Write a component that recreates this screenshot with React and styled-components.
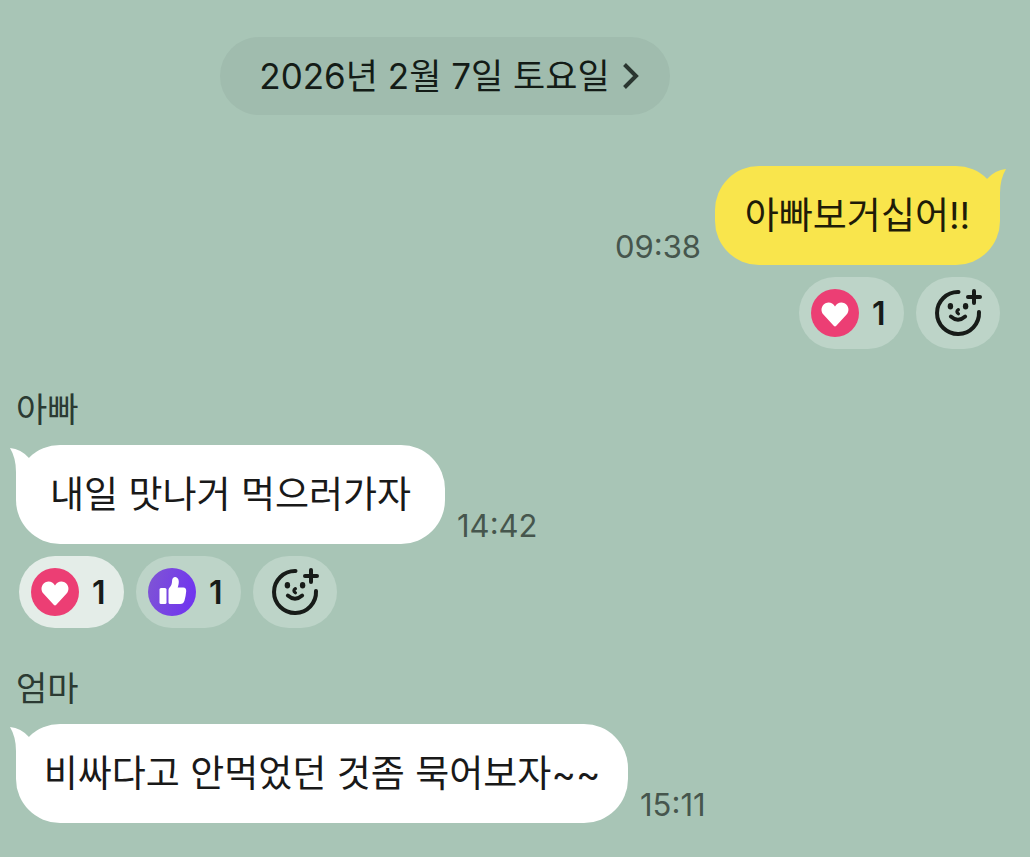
import React from "react";
import styled, { createGlobalStyle } from "styled-components";

const GlobalStyle = createGlobalStyle`
  *, *::before, *::after { box-sizing: border-box; }
  body {
    margin: 0;
    background: #a8c5b6;
    color: #191c1a;
    font-family: Inter, "Noto Sans CJK KR", sans-serif;
  }
`;

const Chat = styled.main`
  display: flex;
  flex-direction: column;
  min-height: 100vh;
  padding: 37px 30px 34px 16px;
`;

const DateRow = styled.div`
  display: flex;
  justify-content: center;
  padding-right: 126px;
  margin-bottom: 51px;
`;

const DatePill = styled.button`
  display: flex;
  align-items: center;
  justify-content: center;
  gap: 13px;
  width: 450px;
  height: 78px;
  padding: 0 0 0 8px;
  border: 0;
  border-radius: 39px;
  background: #a0bcae;
  color: #141c17;
  font: inherit;
  font-size: 35px;
  line-height: 48px;
  white-space: nowrap;
`;

const Message = styled.article`
  display: flex;
  flex-direction: column;
  align-items: ${(p) => (p.$mine ? "flex-end" : "flex-start")};
`;

const Sender = styled.h2`
  margin: 37px 0 11px;
  color: #2b3a32;
  font-size: 34px;
  font-weight: 400;
  line-height: 48px;
`;

const BubbleRow = styled.div`
  display: flex;
  flex-direction: ${(p) => (p.$mine ? "row-reverse" : "row")};
  align-items: flex-end;
  gap: ${(p) => (p.$mine ? 14 : 12)}px;
`;

const Bubble = styled.div`
  position: relative;
  display: flex;
  align-items: center;
  justify-content: center;
  min-width: ${(p) => p.$width}px;
  height: 99px;
  border-radius: 44px;
  background: ${(p) => (p.$mine ? "#f9e54c" : "#ffffff")};
  color: ${(p) => (p.$mine ? "#1f1c08" : "#191919")};
`;

const BubbleText = styled.p`
  margin: 0;
  font-size: 37px;
  line-height: 52px;
  white-space: nowrap;
`;

const Tail = styled.svg`
  position: absolute;
  top: 3px;
  ${(p) => (p.$mine ? "right: -6px;" : "left: -6px; transform: scaleX(-1);")}
  fill: ${(p) => (p.$mine ? "#f9e54c" : "#ffffff")};
`;

const Time = styled.time`
  color: #46564d;
  font-size: 31px;
  line-height: 36px;
`;

const Reactions = styled.div`
  display: flex;
  gap: 12px;
  margin-top: 12px;
  padding-left: ${(p) => (p.$mine ? 0 : 3)}px;
`;

const ReactionButton = styled.button`
  display: flex;
  align-items: center;
  gap: 13px;
  width: 105px;
  height: 72px;
  padding: 0 12px;
  border: 0;
  border-radius: 36px;
  background: ${(p) => (p.$selected ? "#e4ede8" : "#bdd4c8")};
  color: #171b18;
  font: inherit;
  font-size: 32px;
  font-weight: 600;
`;

const AddButton = styled(ReactionButton)`
  justify-content: center;
  width: 84px;
`;

function Chevron() {
  return (
    <svg width="16" height="26" viewBox="0 0 16 26" fill="none" stroke="#2a3630" strokeWidth="4" aria-hidden="true">
      <path d="M1.5 1.5 13 13 1.5 24.5" />
    </svg>
  );
}

function HeartIcon() {
  return (
    <svg width="48" height="48" viewBox="0 0 48 48" aria-hidden="true">
      <circle cx="24" cy="24" r="24" fill="#ec3e74" />
      <path
        d="M24 17.5C21.8 13.6 17.8 12.4 14.4 14.3C10.2 16.8 9.2 22 12.4 25.6L22.7 36.7Q24 38.1 25.3 36.7L35.6 25.6C38.8 22 37.8 16.8 33.6 14.3C30.2 12.4 26.2 13.6 24 17.5Z"
        fill="#fff"
      />
    </svg>
  );
}

function ThumbIcon() {
  return (
    <svg width="48" height="48" viewBox="0 0 48 48" aria-hidden="true">
      <defs>
        <linearGradient id="thumb-fill" x1="0" y1="0" x2="1" y2="0.3">
          <stop offset="0" stopColor="#8056d3" />
          <stop offset="1" stopColor="#7136ee" />
        </linearGradient>
      </defs>
      <circle cx="24" cy="24" r="24" fill="url(#thumb-fill)" />
      <rect x="11.5" y="20" width="7" height="16" rx="1.5" fill="#fff" />
      <path
        d="M20.5 22.2Q20.5 20.8 21.4 19.8C23.3 17.8 24 15.8 24.1 12.5C24.2 10.3 25.6 9 27.3 9.1C29.4 9.2 30.8 11.1 30.8 13.8C30.8 15.9 30.3 17.9 29.7 19.5H35.2C37.4 19.5 38.4 21.1 38.2 23.2C37.9 26.5 37.4 29.4 36.5 32.5C35.8 34.9 34.5 36 32.2 36H22Q20.5 36 20.5 34.5Z"
        fill="#fff"
      />
    </svg>
  );
}

function AddReactionIcon() {
  return (
    <svg width="48" height="48" viewBox="0 0 48 48" fill="none" stroke="#171b18" strokeLinecap="round" aria-hidden="true">
      <path d="M24.5 3A21 21 0 1 0 45 23" strokeWidth="4" />
      <path d="M40 2V14M34 8H46" strokeWidth="4" />
      <path d="M16.8 27.5Q24 33.8 31.2 27.5" strokeWidth="3.8" />
      <path d="M24.4 20.6Q21.4 22.7 24.4 24.8" strokeWidth="3.2" />
      <ellipse cx="16.4" cy="17.2" rx="2.7" ry="3.3" fill="#171b18" stroke="none" />
      <ellipse cx="31.6" cy="17.2" rx="2.7" ry="3.3" fill="#171b18" stroke="none" />
    </svg>
  );
}

const reactionIcons = {
  heart: { label: "하트", Icon: HeartIcon },
  thumb: { label: "좋아요", Icon: ThumbIcon },
};

const messages = [
  { mine: true, text: "아빠보거십어!!", time: "09:38", width: 285, reactions: [{ kind: "heart", count: 1 }] },
  {
    sender: "아빠",
    text: "내일 맛나거 먹으러가자",
    time: "14:42",
    width: 429,
    reactions: [
      { kind: "heart", count: 1, selected: true },
      { kind: "thumb", count: 1 },
    ],
  },
  { sender: "엄마", text: "비싸다고 안먹었던 것좀 묵어보자~~", time: "15:11", width: 612 },
];

function ChatMessage({ mine, sender, text, time, width, reactions }) {
  return (
    <Message $mine={mine}>
      {sender && <Sender>{sender}</Sender>}
      <BubbleRow $mine={mine}>
        <Bubble $mine={mine} $width={width}>
          <Tail $mine={mine} width="36" height="46" viewBox="0 0 36 46" aria-hidden="true">
            <path d="M17 10Q25 1 36 0Q30 10 30 24V46L4 30Z" />
          </Tail>
          <BubbleText>{text}</BubbleText>
        </Bubble>
        <Time>{time}</Time>
      </BubbleRow>
      {reactions && (
        <Reactions $mine={mine}>
          {reactions.map(({ kind, count, selected }) => {
            const { label, Icon } = reactionIcons[kind];
            return (
              <ReactionButton key={kind} type="button" aria-label={`${label} ${count}`} $selected={selected}>
                <Icon />
                {count}
              </ReactionButton>
            );
          })}
          <AddButton type="button" aria-label="공감 추가">
            <AddReactionIcon />
          </AddButton>
        </Reactions>
      )}
    </Message>
  );
}

export default function App() {
  return (
    <>
      <GlobalStyle />
      <Chat>
        <DateRow>
          <DatePill type="button">
            2026년 2월 7일 토요일
            <Chevron />
          </DatePill>
        </DateRow>
        {messages.map((message) => (
          <ChatMessage key={message.time} {...message} />
        ))}
      </Chat>
    </>
  );
}
